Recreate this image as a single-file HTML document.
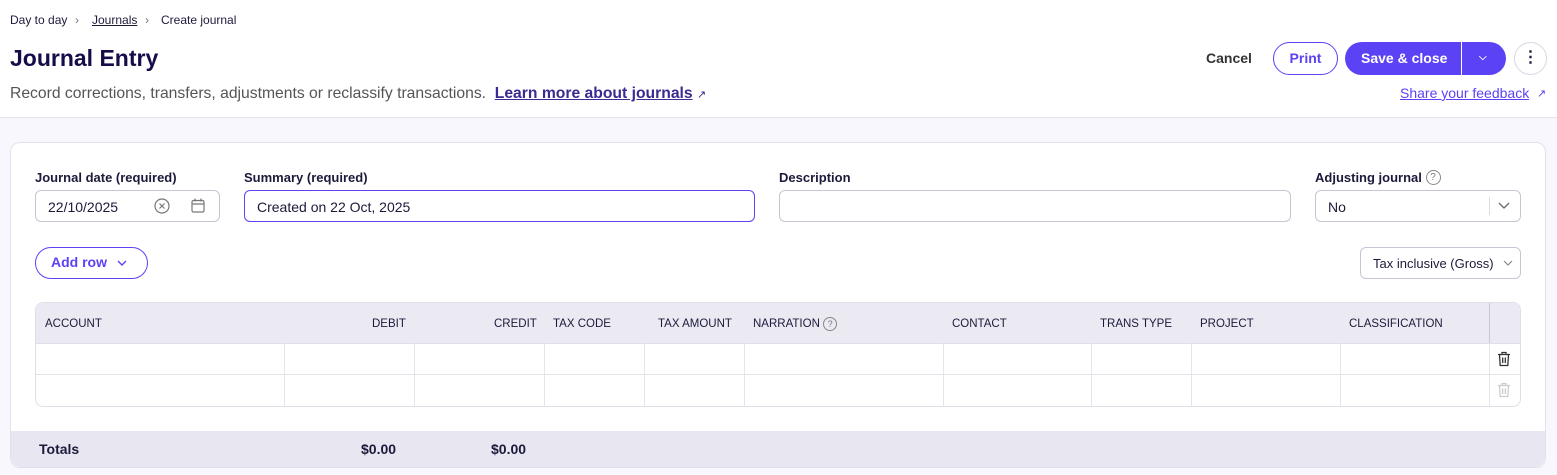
<!DOCTYPE html>
<html><head><style>
*{box-sizing:border-box;margin:0;padding:0}
body{width:1557px;height:475px;overflow:hidden;font-family:"Liberation Sans",sans-serif;color:#1c1a3a;background:#fff;position:relative}
.a{position:absolute}
.bc{font-size:12px;top:13px;color:#1c1a3a}
h1{position:absolute;left:10px;top:45px;font-size:23px;font-weight:bold;color:#150c4a}
.sub{left:10px;top:85px;font-size:15.7px;color:#555}
.lnk{color:#3b2a8f;text-decoration:underline;font-weight:bold}
.bg{left:0;top:117px;width:1557px;height:358px;background:#f8f7fd;border-top:1px solid #e4e2ef}
.card{left:10px;top:142px;width:1536px;height:326px;background:#fff;border:1px solid #e2e0ee;border-radius:10px;overflow:hidden}
.lbl{font-size:13px;font-weight:bold;top:170px;color:#1c1a3a}
.inp{height:32px;border:1px solid #c7c5d3;border-radius:6px;top:190px;font-size:14px;padding:8px 12px}
.btn{border-radius:17px;font-weight:bold;font-size:14px;text-align:center}
.th{font-size:11.5px;top:317px;color:#1c1a3a;line-height:14px}
.vl{width:1px;background:#e4e3ea;top:343px;height:63px}
</style></head><body>
<div class="a bc" style="left:10px">Day to day</div>
<div class="a bc" style="left:75px;color:#777">&#x203A;</div>
<div class="a bc" style="left:92px;text-decoration:underline">Journals</div>
<div class="a bc" style="left:145px;color:#777">&#x203A;</div>
<div class="a bc" style="left:161px">Create journal</div>
<h1>Journal Entry</h1>
<div class="a sub">Record corrections, transfers, adjustments or reclassify transactions. &nbsp;<span class="lnk">Learn more about journals</span> <span style="font-size:11px;color:#3b2a8f">&#x2197;</span></div>

<div class="a" style="left:1206px;top:50px;font-size:14px;font-weight:bold;color:#333">Cancel</div>
<div class="a btn" style="left:1273px;top:42px;width:65px;height:33px;border:1.5px solid #5b43f5;color:#5b43f5;line-height:30px">Print</div>
<div class="a btn" style="left:1345px;top:42px;width:161px;height:33px;background:#5b43f5;color:#fff;line-height:33px"><span style="position:absolute;left:16px">Save &amp; close</span><span style="position:absolute;left:116px;top:0;width:1px;height:33px;background:#fff"></span><span style="position:absolute;left:134px;top:-1px;font-size:10px">&#x2335;</span></div>
<div class="a" style="left:1514px;top:42px;width:33px;height:33px;border:1px solid #d8d6e2;border-radius:50%;text-align:center;line-height:30px;font-weight:bold;font-size:16px">&#x22EE;</div>
<div class="a" style="left:1400px;top:85px;font-size:14px;color:#5b43f5;text-decoration:underline">Share your feedback</div>
<div class="a" style="left:1537px;top:87px;font-size:11px;color:#5b43f5">&#x2197;</div>

<div class="a bg"></div>
<div class="a card"></div>
<div class="a lbl" style="left:35px">Journal date (required)</div>
<div class="a lbl" style="left:244px">Summary (required)</div>
<div class="a lbl" style="left:779px">Description</div>
<div class="a lbl" style="left:1315px;line-height:15px">Adjusting journal <span style="display:inline-block;width:15px;height:15px;border:1px solid #888;border-radius:50%;font-size:10px;text-align:center;line-height:13px;color:#777;font-weight:normal;vertical-align:top">?</span></div>
<div class="a inp" style="left:35px;width:185px">22/10/2025
 <svg style="position:absolute;left:118px;top:7px" width="16" height="16" viewBox="0 0 16 16" fill="none" stroke="#777" stroke-width="1.2"><circle cx="8" cy="8" r="7"/><path d="M5.5 5.5l5 5M10.5 5.5l-5 5"/></svg>
 <svg style="position:absolute;left:155px;top:7px" width="14" height="15" viewBox="0 0 14 15" fill="none" stroke="#777" stroke-width="1.2"><rect x="1" y="2.5" width="12" height="11.5" rx="1.5"/><path d="M1 6h12M4 0.5v3M10 0.5v3"/></svg></div>
<div class="a inp" style="left:244px;width:511px;border:1.5px solid #5b43f5">Created on 22 Oct, 2025</div>
<div class="a inp" style="left:779px;width:512px"></div>
<div class="a inp" style="left:1315px;width:206px">No<span style="position:absolute;left:173px;top:6px;width:1px;height:18px;background:#ddd"></span><svg style="position:absolute;left:182px;top:11px" width="12" height="8" viewBox="0 0 12 8" fill="none" stroke="#666" stroke-width="1.3"><path d="M1 1l5 5 5-5"/></svg></div>

<div class="a btn" style="left:35px;top:247px;width:113px;height:32px;border:1.5px solid #5b43f5;color:#5b43f5;line-height:29px;text-align:left;padding-left:15px">Add row <svg style="margin-left:6px" width="10" height="7" viewBox="0 0 10 7" fill="none" stroke="#5b43f5" stroke-width="1.4"><path d="M1 1l4 4 4-4"/></svg></div>
<div class="a inp" style="left:1360px;top:247px;width:161px;font-size:13px;padding:8px 12px">Tax inclusive (Gross)<svg style="position:absolute;left:142px;top:12px" width="10" height="7" viewBox="0 0 10 7" fill="none" stroke="#888" stroke-width="1.2"><path d="M1 1l4 4 4-4"/></svg></div>

<div class="a" style="left:35px;top:302px;width:1486px;height:105px;border:1px solid #e0dfe8;border-radius:8px;overflow:hidden">
 <div style="height:41px;background:#ebeaf3;border-bottom:1px solid #e0dfe8"></div>
 <div style="height:31px;border-bottom:1px solid #e4e3ea"></div>
</div>
<div class="a" style="left:1489px;top:303px;width:1px;height:40px;background:#c9c7d6"></div>
<div class="a th" style="left:45px">ACCOUNT</div>
<div class="a th" style="left:372px">DEBIT</div>
<div class="a th" style="left:494px">CREDIT</div>
<div class="a th" style="left:553px">TAX CODE</div>
<div class="a th" style="left:658px">TAX AMOUNT</div>
<div class="a th" style="left:753px">NARRATION <span style="display:inline-block;width:14px;height:14px;border:1px solid #888;border-radius:50%;font-size:9px;text-align:center;line-height:12px;color:#777;vertical-align:top">?</span></div>
<div class="a th" style="left:952px">CONTACT</div>
<div class="a th" style="left:1100px">TRANS TYPE</div>
<div class="a th" style="left:1200px">PROJECT</div>
<div class="a th" style="left:1349px">CLASSIFICATION</div>
<div class="a vl" style="left:284px"></div><div class="a vl" style="left:414px"></div><div class="a vl" style="left:544px"></div><div class="a vl" style="left:644px"></div><div class="a vl" style="left:744px"></div><div class="a vl" style="left:943px"></div><div class="a vl" style="left:1091px"></div><div class="a vl" style="left:1191px"></div><div class="a vl" style="left:1340px"></div><div class="a vl" style="left:1489px"></div>
<svg class="a" style="left:1497px;top:351px" width="14" height="16" viewBox="0 0 14 16" fill="none" stroke="#333" stroke-width="1.3"><path d="M1 3.5h12M5 3.5V1.5h4v2M2.5 3.5l.7 11h7.6l.7-11M5.7 6.5v5.5M8.3 6.5v5.5"/></svg>
<svg class="a" style="left:1497px;top:382px" width="14" height="16" viewBox="0 0 14 16" fill="none" stroke="#ccc" stroke-width="1.3"><path d="M1 3.5h12M5 3.5V1.5h4v2M2.5 3.5l.7 11h7.6l.7-11M5.7 6.5v5.5M8.3 6.5v5.5"/></svg>

<div class="a" style="left:11px;top:431px;width:1534px;height:36px;background:#e8e7f1;border-radius:0 0 10px 10px"></div>
<div class="a" style="left:39px;top:441px;font-size:14px;font-weight:bold">Totals</div>
<div class="a" style="left:361px;top:441px;font-size:14px;font-weight:bold">$0.00</div>
<div class="a" style="left:491px;top:441px;font-size:14px;font-weight:bold">$0.00</div>
</body></html>
